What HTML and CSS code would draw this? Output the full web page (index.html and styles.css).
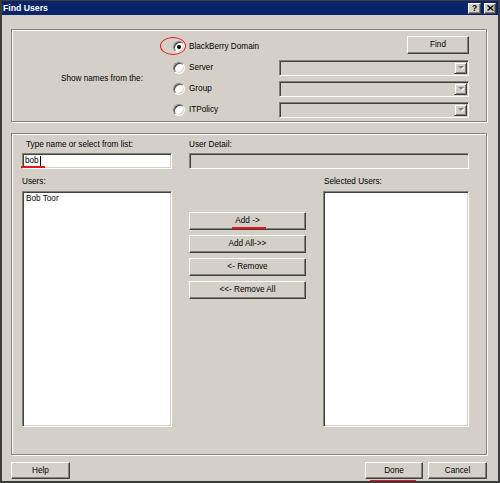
FILE: index.html
```html
<!DOCTYPE html>
<html>
<head>
<meta charset="utf-8">
<title>Find Users</title>
<link rel="stylesheet" href="styles.css">
</head>
<body>
<div class="window">
  <div class="titlebar">
    <span class="title">Find Users</span>
    <div class="caption-btns">
      <span class="cap-btn help-cap">?</span>
      <span class="cap-btn close-cap"><svg width="7" height="6" viewBox="0 0 7 6"><path d="M0.5 0.5L6.5 5.5M6.5 0.5L0.5 5.5" stroke="#000" stroke-width="1.4"/></svg></span>
    </div>
  </div>
  <div class="content">
    <div class="group top-group">
      <div class="show-label">Show names from the:</div>
      <div class="radio-cell row1"><span class="radio checked"></span><span>BlackBerry Domain</span><span class="ellipse"></span></div>
      <div class="find-cell"><div class="btn find">Find</div></div>
      <div class="radio-cell row2"><span class="radio"></span><span>Server</span></div>
      <div class="sunken combo row2"><span class="combo-btn"><span class="arrow"></span></span></div>
      <div class="radio-cell row3"><span class="radio"></span><span>Group</span></div>
      <div class="sunken combo row3"><span class="combo-btn"><span class="arrow"></span></span></div>
      <div class="radio-cell row4"><span class="radio"></span><span>ITPolicy</span></div>
      <div class="sunken combo row4"><span class="combo-btn"><span class="arrow"></span></span></div>
    </div>
    <div class="group lower-group">
      <div class="lbl type-lbl">Type name or select from list:</div>
      <div class="lbl span2">User Detail:</div>
      <div class="sunken input">bob<span class="caret"></span><span class="red-line bob-line"></span></div>
      <div class="sunken detail span2"></div>
      <div class="lbl lbl2">Users:</div>
      <div class="lbl lbl2"></div>
      <div class="lbl lbl2 sel-lbl">Selected Users:</div>
      <div class="sunken listbox"><div class="item">Bob Toor</div></div>
      <div class="move-btns">
        <div class="btn move">Add -&gt;<span class="red-line add-line"></span></div>
        <div class="btn move">Add All-&gt;&gt;</div>
        <div class="btn move">&lt;- Remove</div>
        <div class="btn move">&lt;&lt;- Remove All</div>
      </div>
      <div class="sunken listbox"></div>
    </div>
    <div class="footer">
      <div class="btn help">Help</div>
      <div class="spacer"></div>
      <div class="btn done">Done<span class="red-line done-line"></span></div>
      <div class="btn cancel">Cancel</div>
    </div>
  </div>
</div>
</body>
</html>
```
FILE: styles.css
```css
body {
  margin: 0;
  background: #d4d0c8;
  font-family: "Liberation Sans", Arial, sans-serif;
  font-size: 8.2px;
  color: #000;
}

.window {
  width: 500px;
  height: 483px;
  box-sizing: border-box;
  border: 2px solid #3c3c3c;
  border-top: 1px solid #3c3c3c;
  background: #d4d0c8;
  overflow: hidden;
}

.titlebar {
  height: 14px;
  background: #0a246a;
  display: flex;
  align-items: center;
  padding: 0 2px 0 1px;
}

.title {
  color: #fff;
  font-weight: bold;
  font-size: 8.7px;
  line-height: 14px;
}

.caption-btns {
  margin-left: auto;
  display: flex;
  gap: 3px;
}

.cap-btn {
  width: 13px;
  height: 11px;
  box-sizing: border-box;
  background: #d4d0c8;
  border: 1px solid;
  border-color: #fff #404040 #404040 #fff;
  box-shadow: inset -1px -1px #808080;
  display: flex;
  align-items: center;
  justify-content: center;
  font-weight: bold;
  font-size: 8.5px;
  line-height: 9px;
}

.close-cap {
  width: 12px;
}

.content {
  padding: 14px 11px 0 9px;
}

.group {
  box-sizing: border-box;
  border: 1px solid #808080;
  box-shadow: inset 1px 1px #fff, 1px 1px #fff;
}

.top-group {
  height: 93px;
  display: grid;
  grid-template-columns: 161px 106px 190px;
  grid-template-rows: repeat(4, 21px);
  padding: 6px 17px 0 0;
}

.show-label {
  grid-column: 1;
  grid-row: 1 / 5;
  align-self: center;
  padding-left: 49px;
  line-height: 12px;
  margin-top: 1px;
}

.radio-cell {
  grid-column: 2;
  display: flex;
  align-items: center;
  gap: 4px;
  position: relative;
  line-height: 12px;
}

.row1 { grid-row: 1; }
.row2 { grid-row: 2; }
.row3 { grid-row: 3; }
.row4 { grid-row: 4; }

.radio {
  width: 12px;
  height: 12px;
  box-sizing: border-box;
  border-radius: 50%;
  background: #fff;
  border: 1px solid;
  border-color: #808080 #fff #fff #808080;
  box-shadow: inset 1px 1px #404040, inset -1px -1px #d4d0c8;
  display: flex;
  align-items: center;
  justify-content: center;
  flex: none;
}

.radio.checked::after {
  content: "";
  width: 4px;
  height: 4px;
  border-radius: 50%;
  background: #000;
}

.ellipse {
  position: absolute;
  left: -13px;
  top: 1px;
  width: 26px;
  height: 18px;
  box-sizing: border-box;
  border: 1.5px solid #e8141b;
  border-radius: 50%;
}

.find-cell {
  grid-column: 3;
  grid-row: 1;
  display: flex;
  justify-content: flex-end;
  align-items: flex-start;
}

.btn {
  box-sizing: border-box;
  background: #d4d0c8;
  border: 1px solid;
  border-color: #fff #404040 #404040 #fff;
  box-shadow: inset -1px -1px #808080;
  display: flex;
  align-items: center;
  justify-content: center;
  position: relative;
  line-height: 12px;
}

.find {
  width: 62px;
  height: 18px;
}

.sunken {
  box-sizing: border-box;
  border: 1px solid;
  border-color: #808080 #fff #fff #808080;
  box-shadow: inset 1px 1px #404040, inset -1px -1px #d4d0c8;
}

.combo {
  grid-column: 3;
  align-self: center;
  height: 16px;
  background: #d4d0c8;
  display: flex;
  justify-content: flex-end;
  padding: 1px;
}

.combo-btn {
  width: 13px;
  height: 12px;
  box-sizing: border-box;
  background: #d4d0c8;
  border: 1px solid;
  border-color: #d4d0c8 #404040 #404040 #d4d0c8;
  box-shadow: inset 1px 1px #fff, inset -1px -1px #808080;
  display: flex;
  align-items: center;
  justify-content: center;
}

.arrow {
  width: 0;
  height: 0;
  border-left: 3px solid transparent;
  border-right: 3px solid transparent;
  border-top: 3px solid #808080;
  filter: drop-shadow(1px 1px 0 #fff);
}

.lower-group {
  margin-top: 11px;
  height: 322px;
  display: grid;
  grid-template-columns: 150px 117px 146px;
  column-gap: 17px;
  align-content: start;
  padding: 5px 17px 0 10px;
}

.lbl {
  line-height: 12px;
  height: 12px;
}

.type-lbl {
  padding-left: 4px;
}

.span2 {
  grid-column: 2 / 4;
}

.input {
  margin-top: 2px;
  height: 16px;
  background: #fff;
  padding: 0 0 0 2px;
  line-height: 14px;
  position: relative;
  display: flex;
  align-items: center;
}

.caret {
  display: inline-block;
  width: 1px;
  height: 10px;
  background: #000;
  margin-left: 1px;
}

.detail {
  margin-top: 2px;
  height: 16px;
  background: #d4d0c8;
}

.lbl2 {
  margin-top: 7px;
}

.sel-lbl {
  padding-left: 1px;
}

.listbox {
  margin-top: 3px;
  height: 236px;
  background: #fff;
  padding: 1px 3px;
}

.item {
  line-height: 12px;
}

.move-btns {
  margin-top: 3px;
  padding-top: 21px;
  display: flex;
  flex-direction: column;
  gap: 5px;
}

.move {
  height: 18px;
}

.footer {
  margin-top: 7px;
  display: flex;
  gap: 5px;
}

.footer .btn {
  height: 17px;
}

.help { width: 59px; }
.spacer { flex: 1; }
.done { width: 58px; }
.cancel { width: 59px; }

.red-line {
  position: absolute;
  height: 1.5px;
  background: #e8141b;
}

.bob-line {
  left: -2px;
  top: 12px;
  width: 24px;
}

.add-line {
  left: 42px;
  top: 14px;
  width: 34px;
}

.done-line {
  left: 4px;
  top: 17px;
  width: 46px;
  height: 2px;
}
```
